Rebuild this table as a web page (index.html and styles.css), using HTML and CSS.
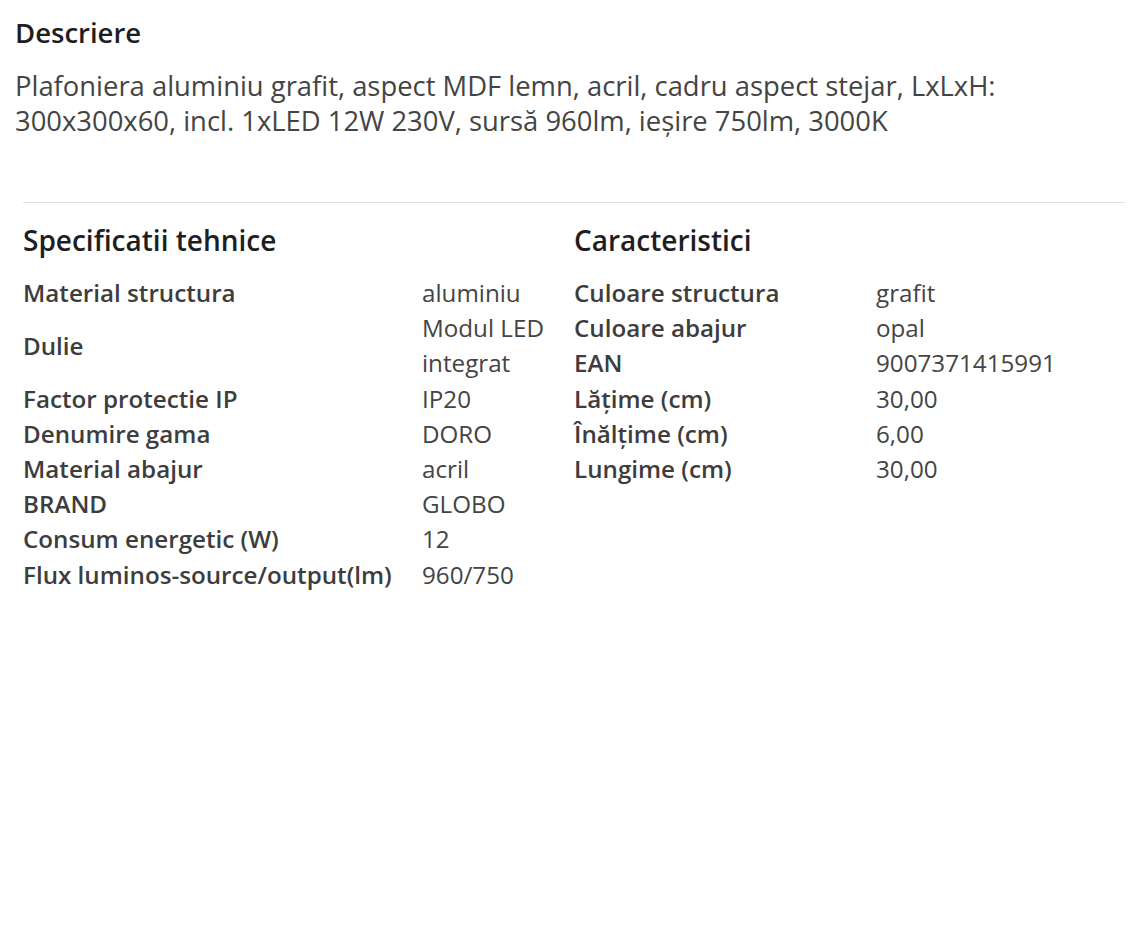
FILE: index.html
```html
<!DOCTYPE html>
<html lang="ro">
<head>
<meta charset="utf-8">
<title>Descriere</title>
<link rel="stylesheet" href="styles.css">
</head>
<body>
<div class="page">
  <section class="desc">
    <h2 class="desc-title">Descriere</h2>
    <p class="desc-text">Plafoniera aluminiu grafit, aspect MDF lemn, acril, cadru aspect stejar, LxLxH: 300x300x60, incl. 1xLED 12W 230V, sursă 960lm, ieşire 750lm, 3000K</p>
  </section>
  <section class="specs">
    <div class="spec-col">
      <h3 class="spec-title">Specificatii tehnice</h3>
      <div class="spec-grid spec-grid-left">
        <div class="lbl">Material structura</div><div class="val">aluminiu</div>
        <div class="lbl">Dulie</div><div class="val">Modul LED integrat</div>
        <div class="lbl">Factor protectie IP</div><div class="val">IP20</div>
        <div class="lbl">Denumire gama</div><div class="val">DORO</div>
        <div class="lbl">Material abajur</div><div class="val">acril</div>
        <div class="lbl">BRAND</div><div class="val">GLOBO</div>
        <div class="lbl">Consum energetic (W)</div><div class="val">12</div>
        <div class="lbl">Flux luminos-source/output(lm)</div><div class="val">960/750</div>
      </div>
    </div>
    <div class="spec-col">
      <h3 class="spec-title">Caracteristici</h3>
      <div class="spec-grid spec-grid-right">
        <div class="lbl">Culoare structura</div><div class="val">grafit</div>
        <div class="lbl">Culoare abajur</div><div class="val">opal</div>
        <div class="lbl">EAN</div><div class="val">9007371415991</div>
        <div class="lbl">Lăţime (cm)</div><div class="val">30,00</div>
        <div class="lbl">Înălţime (cm)</div><div class="val">6,00</div>
        <div class="lbl">Lungime (cm)</div><div class="val">30,00</div>
      </div>
    </div>
  </section>
</div>
</body>
</html>
```

FILE: styles.css
```css
html, body {
  margin: 0;
  padding: 0;
  background: #ffffff;
}

body {
  font-family: "Open Sans", "Liberation Sans", sans-serif;
  color: #444444;
}

.page {
  padding: 15px 11px 0 15px;
}

.desc-title {
  margin: 0;
  font-size: 27.5px;
  line-height: 36px;
  font-weight: 600;
  color: #1e1e1e;
}

.desc-text {
  margin: 17px 0 0 0;
  font-size: 27.4px;
  line-height: 35px;
  font-weight: 400;
  color: #444444;
}

.specs {
  margin: 64px 0 0 8px;
  border-top: 1px solid #dddddd;
  display: grid;
  grid-template-columns: 1fr 1fr;
}

.spec-title {
  margin: 19px 0 0 0;
  font-size: 28px;
  line-height: 36px;
  font-weight: 600;
  color: #1e1e1e;
}

.spec-grid {
  margin-top: 17px;
  display: grid;
  align-items: center;
  font-size: 24.2px;
  line-height: 35.2px;
}

.spec-grid-left {
  grid-template-columns: 399px 1fr;
}

.spec-grid-right {
  grid-template-columns: 302px 1fr;
}

.lbl {
  font-weight: 600;
  color: #3d3d3d;
}

.val {
  font-weight: 400;
  color: #444444;
}
```
